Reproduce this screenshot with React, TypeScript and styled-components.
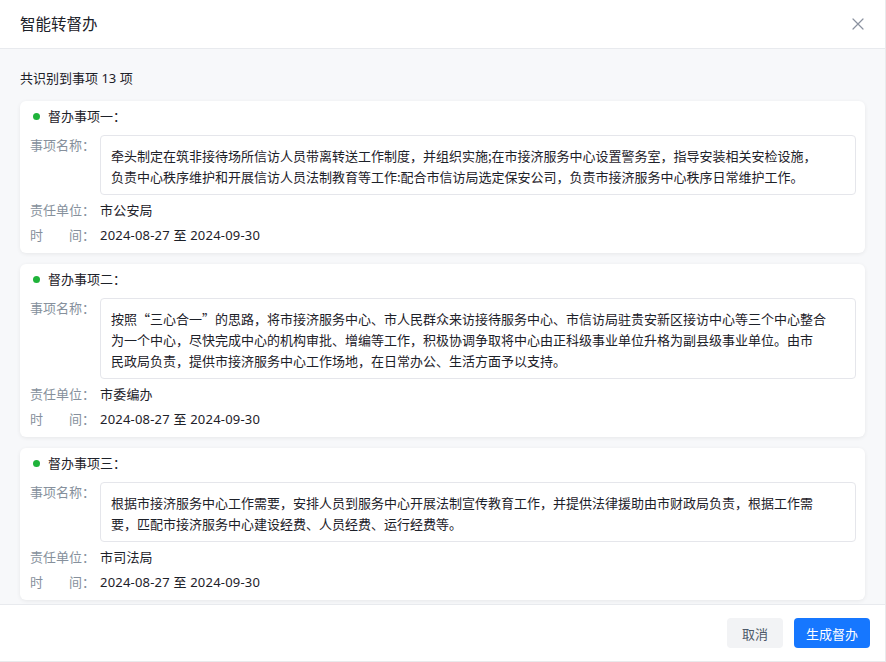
import React from "react";
import styled, { createGlobalStyle } from "styled-components";

const Global = createGlobalStyle`
  html, body { margin: 0; padding: 0; background: #fff; }
  body { font-family: "Noto Sans", "Noto Sans CJK SC", sans-serif; color: #1d2129; }
  * { box-sizing: border-box; }
`;

const Modal = styled.div`
  width: 886px;
  height: 662px;
  display: flex;
  flex-direction: column;
  background: #fff;
  border-right: 1px solid #e9eaec;
  border-bottom: 1px solid #e9eaec;
  overflow: hidden;
`;

const Header = styled.div`
  height: 49px;
  flex: none;
  display: flex;
  align-items: center;
  justify-content: space-between;
  padding: 0 20px 0 20px;
  border-bottom: 1px solid #e8eaee;
`;

const Title = styled.div`
  font-size: 15.5px;
  line-height: 22px;
  color: #1d2129;
  margin-top: -1px;
`;

const Close = styled.button`
  border: none;
  background: none;
  padding: 0;
  width: 16px;
  height: 16px;
  display: flex;
  align-items: center;
  justify-content: center;
  color: #8a919f;
  margin-right: -1px;
`;

const Body = styled.div`
  flex: 1;
  min-height: 0;
  overflow: hidden;
  background: #f7f8fa;
  padding: 19px 20px 0 20px;
`;

const Summary = styled.div`
  font-size: 13px;
  line-height: 20px;
  color: #1d2129;
  margin-bottom: 13px;
`;

const List = styled.div`
  display: flex;
  flex-direction: column;
  gap: 11px;
`;

const Card = styled.div`
  background: #fff;
  border-radius: 6px;
  box-shadow: 0 1px 4px rgba(0, 0, 0, 0.07);
  padding: 5px 9px 8px 10px;
`;

const CardTitle = styled.div`
  display: flex;
  align-items: center;
  font-size: 13px;
  line-height: 20px;
  color: #1d2129;
  padding-left: 3px;
  margin-bottom: 9px;
`;

const Dot = styled.span`
  width: 7px;
  height: 7px;
  border-radius: 50%;
  background: #1fb33a;
  margin-right: 8px;
`;

const Row = styled.div<{ $gap?: number }>`
  display: flex;
  align-items: flex-start;
  margin-top: ${(p) => p.$gap ?? 0}px;
  font-size: 13px;
  line-height: 20px;
`;

const Label = styled.div`
  width: 70px;
  flex: none;
  color: #86909c;
  white-space: pre;
`;

const Value = styled.div`
  color: #1d2129;
  letter-spacing: 0.2px;
`;

const TextBox = styled.div`
  flex: 1;
  border: 1px solid #e5e6eb;
  border-radius: 4px;
  padding: 9px 12px 7px 10px;
  font-family: "Noto Sans CJK SC", "Noto Sans", sans-serif;
  font-size: 13px;
  line-height: 21px;
  color: #1d2129;
  white-space: pre-line;
`;

const Footer = styled.div`
  height: 57px;
  flex: none;
  display: flex;
  align-items: center;
  justify-content: flex-end;
  gap: 11px;
  padding: 0 15px 0 0;
  border-top: 1px solid #e8eaee;
`;

const Button = styled.button<{ $primary?: boolean }>`
  height: 30px;
  padding: 0 ${(p) => (p.$primary ? 12 : 15)}px;
  border: none;
  border-radius: 4px;
  font-family: "Noto Sans", "Noto Sans CJK SC", sans-serif;
  font-size: 13px;
  background: ${(p) => (p.$primary ? "#1677ff" : "#f2f3f5")};
  color: ${(p) => (p.$primary ? "#fff" : "#4e5969")};
`;

type Item = { title: string; text: string; unit: string; time: string };

const items: Item[] = [
  {
    title: "督办事项一：",
    text:
      "牵头制定在筑非接待场所信访人员带离转送工作制度，并组织实施;在市接济服务中心设置警务室，指导安装相关安检设施，\n负责中心秩序维护和开展信访人员法制教育等工作:配合市信访局选定保安公司，负责市接济服务中心秩序日常维护工作。",
    unit: "市公安局",
    time: "2024-08-27 至 2024-09-30",
  },
  {
    title: "督办事项二：",
    text:
      "按照“三心合一”的思路，将市接济服务中心、市人民群众来访接待服务中心、市信访局驻贵安新区接访中心等三个中心整合\n为一个中心，尽快完成中心的机构审批、增编等工作，积极协调争取将中心由正科级事业单位升格为副县级事业单位。由市\n民政局负责，提供市接济服务中心工作场地，在日常办公、生活方面予以支持。",
    unit: "市委编办",
    time: "2024-08-27 至 2024-09-30",
  },
  {
    title: "督办事项三：",
    text:
      "根据市接济服务中心工作需要，安排人员到服务中心开展法制宣传教育工作，并提供法律援助由市财政局负责，根据工作需\n要，匹配市接济服务中心建设经费、人员经费、运行经费等。",
    unit: "市司法局",
    time: "2024-08-27 至 2024-09-30",
  },
];

export default function App() {
  return (
    <>
      <Global />
      <Modal>
        <Header>
          <Title>智能转督办</Title>
          <Close aria-label="close">
            <svg width="12" height="12" viewBox="0 0 12 12" fill="none" stroke="currentColor" strokeWidth="1.2" strokeLinecap="round">
              <path d="M1 1L11 11M11 1L1 11" />
            </svg>
          </Close>
        </Header>
        <Body>
          <Summary>共识别到事项 13 项</Summary>
          <List>
            {items.map((it) => (
              <Card key={it.title}>
                <CardTitle>
                  <Dot />
                  {it.title}
                </CardTitle>
                <Row>
                  <Label>事项名称：</Label>
                  <TextBox>{it.text}</TextBox>
                </Row>
                <Row $gap={5}>
                  <Label>责任单位：</Label>
                  <Value>{it.unit}</Value>
                </Row>
                <Row $gap={5}>
                  <Label>时　　间：</Label>
                  <Value>{it.time}</Value>
                </Row>
              </Card>
            ))}
          </List>
        </Body>
        <Footer>
          <Button>取消</Button>
          <Button $primary>生成督办</Button>
        </Footer>
      </Modal>
    </>
  );
}
